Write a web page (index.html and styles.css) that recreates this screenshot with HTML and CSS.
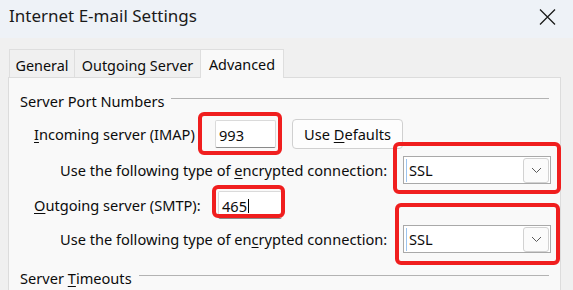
FILE: index.html
```html
<!DOCTYPE html>
<html>
<head>
<meta charset="utf-8">
<link rel="stylesheet" href="styles.css">
</head>
<body>
<div class="window">
  <div class="titlebar">
    <span class="title">Internet E-mail Settings</span>
    <svg class="close" width="17" height="16" viewBox="0 0 17 16"><path d="M1 0.5 L16 15.5 M16 0.5 L1 15.5" stroke="#1b1b1b" stroke-width="1.3" fill="none"/></svg>
  </div>
  <div class="tabs">
    <div class="tab tab-general">General</div>
    <div class="tab tab-outgoing">Outgoing Server</div>
    <div class="tab tab-adv active">Advanced</div>
  </div>
  <div class="panel">
    <div class="group-head head-ports"><span class="group-title">Server Port Numbers</span><span class="rule"></span></div>
    <div class="row row-in">
      <span class="lbl lbl-in"><u>I</u>ncoming server (IMAP)</span>
      <span class="field">
        <span class="input input-in">993</span>
        <span class="mark mark-1"></span>
      </span>
      <span class="btn"><span>Use <u>D</u>efaults</span></span>
    </div>
    <div class="row row-enc">
      <span class="enc-text">Use the following type of <u>e</u>ncrypted connection:</span>
      <span class="field field-sel">
        <span class="select"><span class="sel-caret"></span><span class="sel-val">SSL</span><span class="drop"><svg width="11" height="7" viewBox="0 0 11 7"><path d="M1 1 L5.5 5.5 L10 1" stroke="#5a5a5a" stroke-width="1" fill="none"/></svg></span></span>
        <span class="mark mark-2"></span>
      </span>
    </div>
    <div class="row row-out">
      <span class="lbl lbl-out"><u>O</u>utgoing server (SMTP):</span>
      <span class="field">
        <span class="input input-out">465<span class="caret"></span></span>
        <span class="mark mark-3"></span>
      </span>
    </div>
    <div class="row row-enc2">
      <span class="enc-text">Use the following type of en<u>c</u>rypted connection:</span>
      <span class="field field-sel">
        <span class="select"><span class="sel-caret"></span><span class="sel-val">SSL</span><span class="drop"><svg width="11" height="7" viewBox="0 0 11 7"><path d="M1 1 L5.5 5.5 L10 1" stroke="#5a5a5a" stroke-width="1" fill="none"/></svg></span></span>
        <span class="mark mark-4"></span>
      </span>
    </div>
    <div class="group-head head-timeouts"><span class="group-title">Server <u>T</u>imeouts</span><span class="rule"></span></div>
  </div>
</div>
</body>
</html>
```
FILE: styles.css
```css
* { box-sizing: border-box; }
html, body { margin: 0; padding: 0; }
body {
  width: 573px;
  height: 290px;
  overflow: hidden;
  background: #f0f0f0;
  font-family: "Noto Sans", "Open Sans", sans-serif;
  font-size: 14.6px;
  color: #0c0c0c;
}
u { text-decoration: underline; text-underline-offset: 2px; text-decoration-thickness: 1px; }
.window { width: 573px; height: 290px; background: #f0f0f0; overflow: hidden; }
.titlebar {
  height: 38px;
  background: #eef2f7;
  display: flex;
  align-items: flex-start;
  justify-content: space-between;
  padding: 5px 17px 0 9px;
}
.title { font-size: 17px; line-height: 22px; color: #1a1a1a; }
.close { margin-top: 4px; }

.tabs {
  display: flex;
  margin-top: 11px;
  padding-left: 9px;
  height: 28px;
  position: relative;
  z-index: 2;
}
.tab {
  height: 28px;
  border: 1px solid #dedede;
  border-bottom: none;
  background: #f0f0f0;
  display: flex;
  align-items: center;
  justify-content: center;
  padding-top: 3px;
  font-size: 14.4px;
}
.tab-general { width: 66px; }
.tab-outgoing { width: 126px; border-left: none; }
.tab-adv { width: 84px; border-left: 1px solid #dedede; margin-left: -1px; }
.tab.active { background: #f9f9f9; height: 29px; margin-bottom: -1px; padding-top: 1px; }

.panel {
  margin-left: 8px;
  width: 553px;
  height: 213px;
  background: #f9f9f9;
  border: 1px solid #dcdcdc;
  border-bottom: none;
  position: relative;
  z-index: 1;
}
.group-head {
  display: flex;
  align-items: center;
  height: 20px;
  padding-left: 11px;
  padding-right: 11px;
}
.head-ports { margin-top: 13px; }
.head-timeouts { margin-top: 15px; }
.group-title { line-height: 20px; white-space: nowrap; }
.rule {
  flex: 1;
  height: 1px;
  background: #b3b3b3;
  margin-left: 7px;
  margin-top: -5px;
}

.row { display: flex; align-items: center; }
.row-in { height: 30px; margin-top: 8px; }
.row-enc { height: 28px; margin-top: 7px; }
.row-out { height: 28px; margin-top: 7px; }
.row-enc2 { height: 28px; margin-top: 6px; }

.lbl { margin-left: 25px; white-space: nowrap; }
.lbl-in { width: 181px; }
.lbl-out { width: 184px; }
.enc-text { margin-left: 51px; white-space: nowrap; }

.field { position: relative; display: flex; }
.field-sel { margin-left: auto; margin-right: 9px; }

.input {
  height: 28px;
  background: #fff;
  border: 1px solid #dadada;
  border-bottom: 1px solid #8a8a8a;
  border-radius: 2px;
  display: flex;
  align-items: center;
  padding-left: 3px;
  padding-top: 1px;
}
.input-in { width: 61px; }
.input-out { width: 64px; }
.caret { display: inline-block; width: 1px; height: 14px; background: #000; margin-left: 1px; }

.btn {
  margin-left: 16px;
  width: 111px;
  height: 30px;
  border: 1px solid #d0d0d0;
  border-radius: 4px;
  background: #fdfdfd;
  display: flex;
  align-items: center;
  justify-content: center;
}

.select {
  width: 148px;
  height: 28px;
  background: #fff;
  border: 1px solid #a9a9a9;
  display: flex;
  align-items: center;
  padding-left: 2px;
}
.sel-caret { width: 1px; height: 23px; background: #9cc4ef; }
.sel-val { margin-left: 2px; }
.drop {
  margin-left: auto;
  margin-right: 1px;
  width: 26px;
  height: 25px;
  border: 1px solid #d2d2d2;
  border-radius: 3px;
  background: #fbfbfb;
  display: flex;
  align-items: center;
  justify-content: center;
}

.mark {
  position: absolute;
  border: 4px solid #f01e1e;
  border-radius: 6px;
  z-index: 5;
  pointer-events: none;
}
.mark-1 { top: -8px; left: -17px; right: -6px; bottom: -7px; }
.mark-2 { top: -14px; left: -10px; right: -10px; bottom: -10px; }
.mark-3 { top: -6px; left: -6px; right: -3px; bottom: 1px; }
.mark-4 { top: -22px; left: -8px; right: -9px; bottom: -12px; }
```
